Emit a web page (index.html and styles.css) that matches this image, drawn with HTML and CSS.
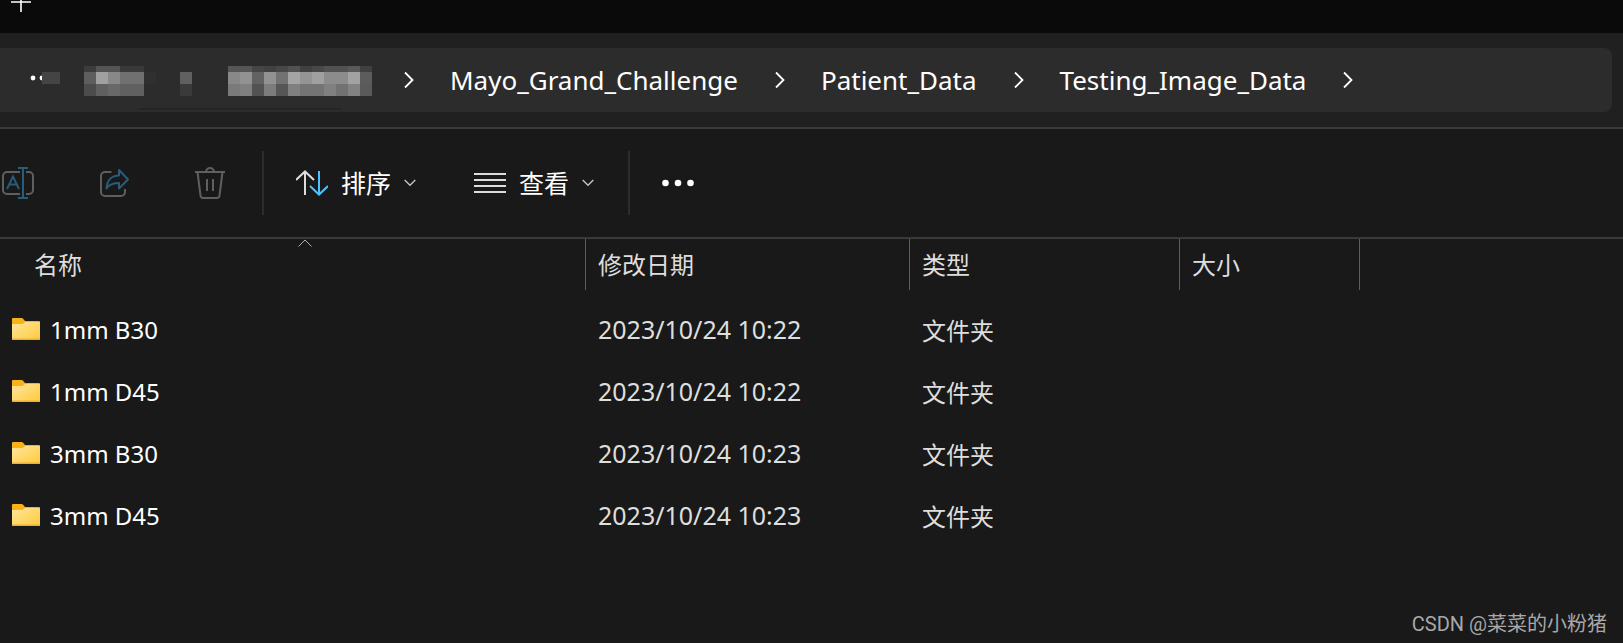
FILE: index.html
```html
<!DOCTYPE html>
<html lang="zh-CN">

<head>
    <meta charset="UTF-8">
    <meta name="viewport" content="width=device-width, initial-scale=1.0">
    <title>Testing_Image_Data</title>
    <link rel="stylesheet" href="styles.css">
</head>

<body>
    <svg class="sprite" width="0" height="0" aria-hidden="true">
        <defs>
            <linearGradient id="folderFront" x1="0" y1="0" x2="1" y2="1">
                <stop offset="0" stop-color="#ffe69c" />
                <stop offset="1" stop-color="#ffca3c" />
            </linearGradient>
            <symbol id="folder" viewBox="0 0 28 22">
                <path d="M0 1a1 1 0 0 1 1-1h8.500q1 0 1.600.7L13 3h14a1 1 0 0 1 1 1v16H0z" fill="#f9b316" />
                <path d="M0 6h9.500q1 0 1.700-.6l1.800-1.400h15v17a1 1 0 0 1-1 1H1a1 1 0 0 1-1-1z" fill="url(#folderFront)" />
                <path d="M0 20.500h28v.5a1 1 0 0 1-1 1H1a1 1 0 0 1-1-1z" fill="#eeb02c" />
            </symbol>
            <symbol id="chevron-right" viewBox="0 0 10 18">
                <path d="M1 1.500l7.500 7.500L1 16.500" fill="none" stroke="#fff" stroke-width="1.800" />
            </symbol>
            <symbol id="chevron-down" viewBox="0 0 12 8">
                <path d="M.7 1l5.300 5.300L11.300 1" fill="none" stroke="#c4c4c4" stroke-width="1.400" />
            </symbol>
        </defs>
    </svg>

    <div class="explorer">
        <header class="tab-bar">
            <button class="new-tab" type="button" aria-label="新建标签页">
                <svg width="20" height="12" viewBox="0 0 20 12">
                    <path d="M0 2h20M10 0v12" fill="none" stroke="#fff" stroke-width="1.600" />
                </svg>
            </button>
        </header>

        <div class="address-row">
            <nav class="address-bar" aria-label="地址栏">
                <svg class="hidden-path" width="372" height="64" viewBox="0 48 372 64" shape-rendering="crispEdges">
                    <g fill="#fff" shape-rendering="auto">
                        <circle cx="33" cy="78" r="2.400" />
                        <circle cx="42" cy="78" r="2.400" />
                    </g>
                    <path d="M42 72h18v12H42z" fill="#444" />
                    <g>
                        <path d="M84 66h12v6H84z" fill="#3c3c3c" />
                        <path d="M96 66h24v6H96z" fill="#545454" />
                        <path d="M120 66h24v6h-24z" fill="#393939" />
                        <path d="M84 72h12v12H84z" fill="#5e5e5e" />
                        <path d="M96 72h12v12H96z" fill="#a0a0a0" />
                        <path d="M108 72h12v12h-12z" fill="#888" />
                        <path d="M120 72h24v12h-24z" fill="#707070" />
                        <path d="M144 72h12v12h-12z" fill="#303030" />
                        <path d="M84 84h12v12H84z" fill="#4c4c4c" />
                        <path d="M96 84h12v12H96z" fill="#606060" />
                        <path d="M108 84h12v12h-12z" fill="#686868" />
                        <path d="M120 84h24v12h-24z" fill="#606060" />
                    </g>
                    <path d="M180 72h12v12h-12z" fill="#606060" />
                    <path d="M180 84h12v12h-12z" fill="#3a3a3a" />
                    <g>
                        <path d="M228 66h24v6h-24z" fill="#565656" />
                        <path d="M252 66h12v6h-12z" fill="#464646" />
                        <path d="M264 66h12v6h-12z" fill="#414141" />
                        <path d="M276 66h12v6h-12z" fill="#484848" />
                        <path d="M288 66h12v6h-12z" fill="#525252" />
                        <path d="M300 66h12v6h-12z" fill="#404040" />
                        <path d="M312 66h12v6h-12z" fill="#484848" />
                        <path d="M324 66h24v6h-24z" fill="#525252" />
                        <path d="M348 66h12v6h-12z" fill="#5a5a5a" />
                        <path d="M360 66h12v6h-12z" fill="#404040" />
                        <path d="M228 72h12v12h-12z" fill="#888" />
                        <path d="M240 72h12v12h-12z" fill="#929292" />
                        <path d="M252 72h12v12h-12z" fill="#626262" />
                        <path d="M264 72h12v12h-12z" fill="#929292" />
                        <path d="M276 72h12v12h-12z" fill="#727272" />
                        <path d="M288 72h12v12h-12z" fill="#a4a4a4" />
                        <path d="M300 72h12v12h-12z" fill="#949494" />
                        <path d="M312 72h12v12h-12z" fill="#a0a0a0" />
                        <path d="M324 72h24v12h-24z" fill="#8c8c8c" />
                        <path d="M348 72h12v12h-12z" fill="#a2a2a2" />
                        <path d="M360 72h12v12h-12z" fill="#5c5c5c" />
                        <path d="M228 84h12v12h-12z" fill="#7a7a7a" />
                        <path d="M240 84h12v12h-12z" fill="#808080" />
                        <path d="M252 84h12v12h-12z" fill="#525252" />
                        <path d="M264 84h12v12h-12z" fill="#7c7c7c" />
                        <path d="M276 84h12v12h-12z" fill="#565656" />
                        <path d="M288 84h12v12h-12z" fill="#808080" />
                        <path d="M300 84h24v12h-24z" fill="#747474" />
                        <path d="M324 84h12v12h-12z" fill="#808080" />
                        <path d="M336 84h12v12h-12z" fill="#727272" />
                        <path d="M348 84h12v12h-12z" fill="#828282" />
                        <path d="M360 84h12v12h-12z" fill="#5a5a5a" />
                    </g>
                    <path d="M136 108h206l-2 2H140z" fill="#252525" />
                </svg>
                <ol class="crumbs">
                    <li class="crumb">
                        <svg width="10" height="18"><use href="#chevron-right" /></svg>
                        <a href="#">Mayo_Grand_Challenge</a>
                    </li>
                    <li class="crumb">
                        <svg width="10" height="18"><use href="#chevron-right" /></svg>
                        <a href="#">Patient_Data</a>
                    </li>
                    <li class="crumb">
                        <svg width="10" height="18"><use href="#chevron-right" /></svg>
                        <a href="#">Testing_Image_Data</a>
                    </li>
                    <li class="crumb">
                        <svg width="10" height="18"><use href="#chevron-right" /></svg>
                    </li>
                </ol>
            </nav>
        </div>

        <div class="toolbar">
            <div class="tool-group tool-group-icons">
                <button class="tool" type="button" aria-label="重命名" disabled>
                    <svg width="34" height="34" viewBox="0 0 34 34" fill="none" stroke-width="2">
                        <path d="M20 6H7a4 4 0 0 0-4 4v14a4 4 0 0 0 4 4h13M26 6h3a4 4 0 0 1 4 4v14a4 4 0 0 1-4 4h-3" stroke="#5f5f5f" />
                        <path d="M7 23l6-12.500L19 23M9.500 18.500h7M18 2h10M18 32h10M23 2v30" stroke="#285c78" />
                    </svg>
                </button>
                <button class="tool" type="button" aria-label="共享" disabled>
                    <svg width="34" height="34" viewBox="0 0 34 34" fill="none" stroke-width="2">
                        <path d="M15.500 6H9a4 4 0 0 0-4 4v16a4 4 0 0 0 4 4h16a4 4 0 0 0 4-4v-3" stroke="#5f5f5f" />
                        <path d="M23 4l9 9.500-9 9v-5.500c-6 0-9.500 1-12.500 5.500.5-8 5-13 12.500-13z" stroke="#285c78" stroke-linejoin="round" />
                    </svg>
                </button>
                <button class="tool" type="button" aria-label="删除" disabled>
                    <svg width="34" height="34" viewBox="0 0 34 34" fill="none" stroke="#5f5f5f" stroke-width="2">
                        <path d="M3 6h30M14 6a4 4 0 0 1 8 0M5.500 6l3 23.500Q9 32 11 32h14q2 0 2.500-2.500L30.500 6M15 13v12M21 13v12" />
                    </svg>
                </button>
            </div>
            <div class="tool-group tool-group-menus">
                <button class="tool" type="button">
                    <svg width="32" height="26" viewBox="0 0 32 26" fill="none" stroke-width="2">
                        <path d="M0 10L9 1.500 18 10M9 2v23" stroke="#dcdcdc" />
                        <path d="M14 16l9 8.500 9-8.500M23 24V1" stroke="#4cc2ff" />
                    </svg>
                    <span>排序</span>
                    <svg width="12" height="8"><use href="#chevron-down" /></svg>
                </button>
                <button class="tool" type="button">
                    <svg width="32" height="26" viewBox="0 0 32 26" fill="none" stroke="#dcdcdc" stroke-width="2">
                        <path d="M0 4h32M0 10h32M0 16h32M0 22h32" />
                    </svg>
                    <span>查看</span>
                    <svg width="12" height="8"><use href="#chevron-down" /></svg>
                </button>
            </div>
            <div class="tool-group tool-group-more">
                <button class="tool" type="button" aria-label="查看更多">
                    <svg width="32" height="8" viewBox="0 0 32 8" fill="#fff">
                        <circle cx="3.500" cy="4" r="3.300" />
                        <circle cx="16" cy="4" r="3.300" />
                        <circle cx="28.500" cy="4" r="3.300" />
                    </svg>
                </button>
            </div>
        </div>

        <main class="files">
            <table class="file-table">
                <colgroup>
                    <col class="col-name">
                    <col class="col-date">
                    <col class="col-type">
                    <col class="col-size">
                    <col>
                </colgroup>
                <thead>
                    <tr>
                        <th scope="col" aria-sort="ascending">
                            名称
                            <svg class="sort-mark" width="14" height="8" viewBox="0 0 14 8">
                                <path d="M.5 7.500L7 1l6.500 6.500" fill="none" stroke="#b0b0b0" />
                            </svg>
                        </th>
                        <th scope="col">修改日期</th>
                        <th scope="col">类型</th>
                        <th scope="col">大小</th>
                        <td></td>
                    </tr>
                </thead>
                <tbody>
                    <tr>
                        <td><div class="file-name"><svg width="28" height="22"><use href="#folder" /></svg>1mm B30</div></td>
                        <td class="file-date">2023/10/24 10:22</td>
                        <td>文件夹</td>
                        <td></td>
                        <td></td>
                    </tr>
                    <tr>
                        <td><div class="file-name"><svg width="28" height="22"><use href="#folder" /></svg>1mm D45</div></td>
                        <td class="file-date">2023/10/24 10:22</td>
                        <td>文件夹</td>
                        <td></td>
                        <td></td>
                    </tr>
                    <tr>
                        <td><div class="file-name"><svg width="28" height="22"><use href="#folder" /></svg>3mm B30</div></td>
                        <td class="file-date">2023/10/24 10:23</td>
                        <td>文件夹</td>
                        <td></td>
                        <td></td>
                    </tr>
                    <tr>
                        <td><div class="file-name"><svg width="28" height="22"><use href="#folder" /></svg>3mm D45</div></td>
                        <td class="file-date">2023/10/24 10:23</td>
                        <td>文件夹</td>
                        <td></td>
                        <td></td>
                    </tr>
                </tbody>
            </table>
        </main>

        <footer class="watermark">CSDN @菜菜的小粉猪</footer>
    </div>
</body>

</html>
```

FILE: styles.css
```css
:root {
    --bg: #191919;
    --bg-nav: #202020;
    --bg-address: #2c2c2c;
    --line: #3a3a3a;
    --text: #fff;
    --text-muted: #dedede;
}

* {
    margin: 0;
    padding: 0;
    box-sizing: border-box;
}

body {
    background: var(--bg);
    color: var(--text);
    font-family: "Noto Sans", "Noto Sans CJK SC", sans-serif;
    font-size: 24px;
}

button {
    background: none;
    border: none;
    color: inherit;
    font: inherit;
}

svg {
    display: block;
    flex-shrink: 0;
}

.sprite {
    position: absolute;
}

.explorer {
    display: flex;
    flex-direction: column;
    min-height: 100vh;
}

/* Tabs */
.tab-bar {
    height: 33px;
    padding-left: 11px;
    background: #0a0a0a;
}

.new-tab {
    display: block;
}

/* Address bar */
.address-row {
    padding: 15px 11px 15px 0;
    background: var(--bg-nav);
    border-bottom: 2px solid var(--line);
}

.address-bar {
    display: flex;
    align-items: center;
    gap: 32px;
    height: 64px;
    background: var(--bg-address);
    border-radius: 0 8px 8px 0;
}

.crumbs {
    display: flex;
    gap: 37px;
    list-style: none;
    font-size: 26px;
    line-height: 36px;
}

.crumb {
    display: flex;
    align-items: center;
    gap: 36px;
}

.crumb a {
    color: inherit;
    text-decoration: none;
}

/* Toolbar */
.toolbar {
    display: flex;
    align-items: center;
    height: 110px;
    border-bottom: 2px solid var(--line);
}

.tool-group {
    display: flex;
    align-items: center;
    height: 64px;
}

.tool-group + .tool-group {
    border-left: 2px solid #2c2c2c;
}

.tool-group-icons {
    gap: 62px;
    padding-right: 36px;
}

.tool-group-menus {
    gap: 58px;
    padding: 0 34px 0 32px;
}

.tool-group-more {
    padding-left: 32px;
}

.tool {
    display: flex;
    align-items: center;
    gap: 13px;
    font-size: 25px;
    line-height: 36px;
}

/* File list */
.files {
    flex: 1;
}

.file-table {
    width: 100%;
    table-layout: fixed;
    border-collapse: separate;
    border-spacing: 0;
    color: var(--text-muted);
    text-align: left;
}

.col-name {
    width: 586px;
}

.col-date {
    width: 324px;
}

.col-type {
    width: 270px;
}

.col-size {
    width: 180px;
}

.file-table th {
    position: relative;
    height: 51px;
    padding-left: 12px;
    border-right: 1px solid #5c5c5c;
    font-weight: 400;
    line-height: 36px;
}

.file-table th:first-child {
    padding-left: 34px;
}

.sort-mark {
    position: absolute;
    top: 0;
    left: 51%;
}

.file-table tbody td {
    height: 62px;
    padding-left: 12px;
}

.file-table tbody::before {
    content: '';
    display: block;
    height: 8px;
}

.file-table .file-date {
    font-size: 25px;
}

.file-name {
    display: flex;
    align-items: center;
    gap: 10px;
    color: var(--text);
}

.watermark {
    padding: 0 16px 4px;
    color: #a8a8a8;
    font-family: Roboto, "Noto Sans CJK SC", sans-serif;
    font-size: 20px;
    line-height: 30px;
    text-align: right;
}
```
